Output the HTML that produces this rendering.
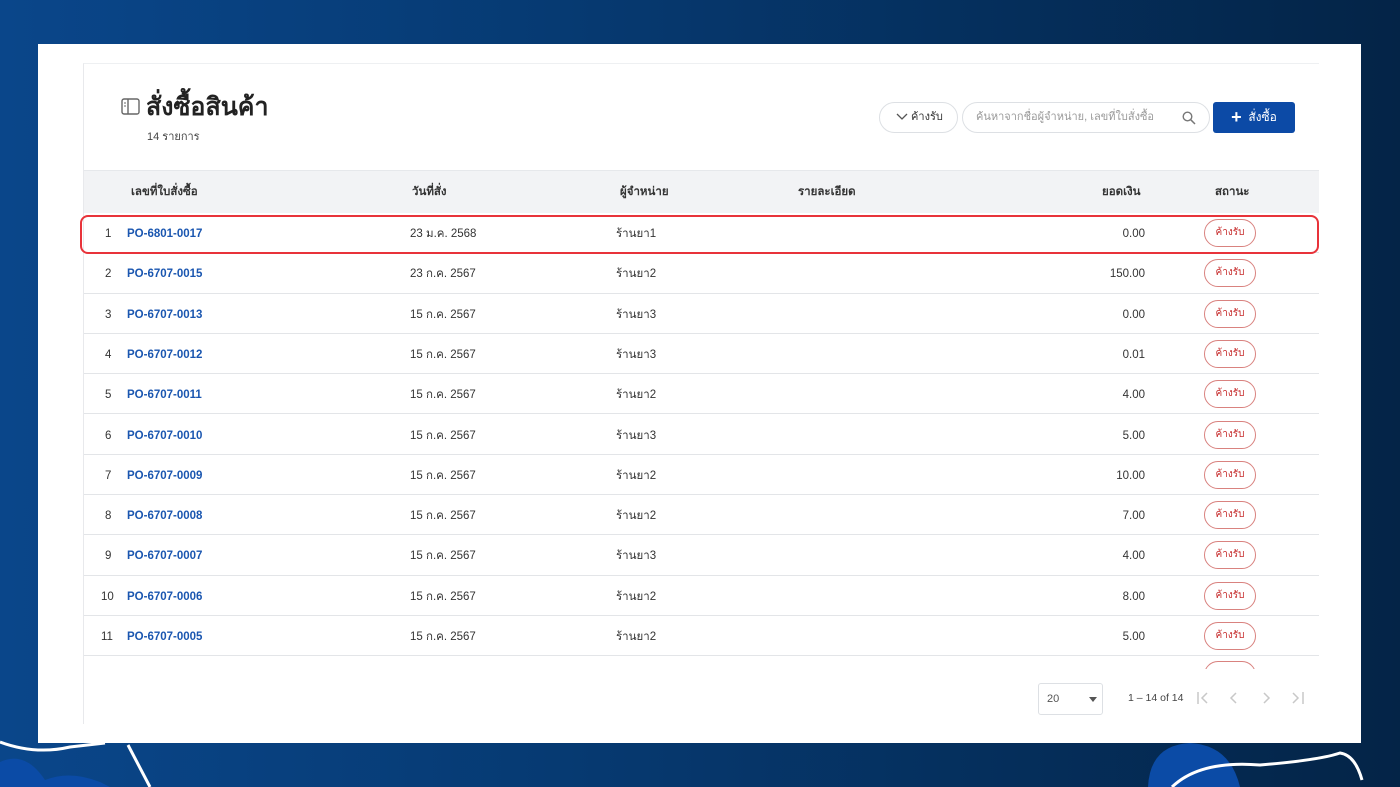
<!DOCTYPE html>
<html><head><meta charset="utf-8"><style>
*{margin:0;padding:0;box-sizing:border-box}
body{width:1400px;height:787px;overflow:hidden;position:relative;font-family:"Liberation Sans","Noto Sans CJK SC",sans-serif;background:linear-gradient(90deg,#0a468a 0%,#063a72 40%,#042447 100%)}
.panel{position:absolute;left:38px;top:44px;width:1323px;height:699px;background:#fff}
.inner{position:absolute;left:45px;top:19px;width:1236px;height:661px;border-left:1px solid #e8e9ec;border-top:1px solid #eef0f2;overflow:hidden}
.t{position:absolute;white-space:nowrap}
.hdr{position:absolute;left:0;top:106px;width:1236px;height:43px;background:#f2f3f5;border-top:1px solid #e6e8eb;font-size:11.5px;font-weight:bold;color:#333}
.hdr span{position:absolute;top:0;line-height:42px}
.row{position:absolute;left:0;width:1236px;height:40.3px;border-bottom:1px solid #e3e5e8;font-size:11.5px;color:#333}
.row span{position:absolute;top:1px;line-height:40px;height:40px}
.badge{position:absolute;left:1120px;top:6px;width:52px;height:28px;border:1px solid #d9827f;border-radius:14px;color:#c62b2b;font-size:10px;text-align:center;line-height:26px}
</style></head><body>
<svg style="position:absolute;left:0;top:720px" width="1400" height="67">
<path d="M0 42 Q25 30 45 60 Q70 50 100 62 L110 67 L0 67Z" fill="#0b4ba6"/>
<path d="M0 22 Q35 35 70 27 L105 23" stroke="#fff" stroke-width="3" fill="none"/>
<path d="M128 25 L150 67" stroke="#fff" stroke-width="3" fill="none"/>
<path d="M1148 67 Q1150 25 1190 23 Q1230 25 1240 67Z" fill="#0b4ba6"/>
<path d="M1172 67 Q1200 40 1260 45 Q1320 40 1340 33 Q1355 35 1362 60" stroke="#fff" stroke-width="3" fill="none"/>
</svg>
<div class="panel"><div class="inner">
<svg class="t" style="left:37px;top:34px" width="19" height="17"><rect x="1" y="1" width="17" height="15" rx="2" fill="none" stroke="#666" stroke-width="1.4"/><line x1="7" y1="1" x2="7" y2="16" stroke="#666" stroke-width="1.4"/><line x1="3" y1="5" x2="5" y2="5" stroke="#666"/><line x1="3" y1="8" x2="5" y2="8" stroke="#666"/></svg>
<div class="t" style="left:62px;top:23px;font-size:25px;font-weight:bold;color:#222">สั่งซื้อสินค้า</div>
<div class="t" style="left:63px;top:63px;font-size:11px;color:#444">14 รายการ</div>
<div class="t" style="left:795px;top:38px;width:79px;height:31px;border:1px solid #dde0e4;border-radius:16px;font-size:11px;color:#333;line-height:29px;padding-left:16px"><svg width="12" height="8" style="vertical-align:middle"><path d="M1 1 L6 6 L11 1" fill="none" stroke="#555" stroke-width="1.3"/></svg> ค้างรับ</div>
<div class="t" style="left:878px;top:38px;width:248px;height:31px;border:1px solid #dde0e4;border-radius:16px;font-size:11px;color:#999;line-height:29px;padding-left:13px">ค้นหาจากชื่อผู้จำหน่าย, เลขที่ใบสั่งซื้อ</div>
<svg class="t" style="left:1098px;top:47px" width="14" height="14"><circle cx="5.5" cy="5.5" r="4.3" fill="none" stroke="#777" stroke-width="1.4"/><line x1="8.7" y1="8.7" x2="13" y2="13" stroke="#777" stroke-width="1.5"/></svg>
<div class="t" style="left:1129px;top:38px;width:82px;height:31px;background:#0c4aa6;border-radius:3px;color:#fff;font-size:12px;line-height:31px;text-align:center"><b style="font-size:18px;vertical-align:-2px">+</b>&nbsp; สั่งซื้อ</div>
<div class="hdr">
<span style="left:47px">เลขที่ใบสั่งซื้อ</span>
<span style="left:328px">วันที่สั่ง</span>
<span style="left:536px">ผู้จำหน่าย</span>
<span style="left:714px">รายละเอียด</span>
<span style="left:1018px">ยอดเงิน</span>
<span style="left:1131px">สถานะ</span>
</div>
<div id="rows"></div>
<div style="position:absolute;left:0;top:593px;width:1236px;height:12px;overflow:hidden"><div class="badge" style="top:4px"></div></div>
<div class="t" style="left:954px;top:619px;width:65px;height:32px;border:1px solid #dde0e4;border-radius:3px;font-size:11px;color:#555;line-height:30px;padding-left:8px">20<span style="position:absolute;left:50px;top:13px;border:4px solid transparent;border-top:5px solid #555"></span></div>
<div class="t" style="left:1044px;top:628px;font-size:10.5px;color:#444">1 – 14 of 14</div>
<svg class="t" style="left:1112px;top:627px" width="115" height="14" fill="none" stroke="#c8c8c8" stroke-width="1.5"><path d="M2 1 V13 M11 2 L6 7 L11 12"/><path d="M40 2 L35 7 L40 12"/><path d="M68 2 L73 7 L68 12"/><path d="M97 2 L102 7 L97 12 M107 1 V13"/></svg>
</div>
<div style="position:absolute;left:42px;top:171px;width:1239px;height:39px;border:2.5px solid #e8333a;border-radius:8px"></div>
</div>
<script>
var d=[["PO-6801-0017","23 ม.ค. 2568","ร้านยา1","0.00"],["PO-6707-0015","23 ก.ค. 2567","ร้านยา2","150.00"],["PO-6707-0013","15 ก.ค. 2567","ร้านยา3","0.00"],["PO-6707-0012","15 ก.ค. 2567","ร้านยา3","0.01"],["PO-6707-0011","15 ก.ค. 2567","ร้านยา2","4.00"],["PO-6707-0010","15 ก.ค. 2567","ร้านยา3","5.00"],["PO-6707-0009","15 ก.ค. 2567","ร้านยา2","10.00"],["PO-6707-0008","15 ก.ค. 2567","ร้านยา2","7.00"],["PO-6707-0007","15 ก.ค. 2567","ร้านยา3","4.00"],["PO-6707-0006","15 ก.ค. 2567","ร้านยา2","8.00"],["PO-6707-0005","15 ก.ค. 2567","ร้านยา2","5.00"]];
var h="";d.forEach(function(r,i){h+='<div class="row" style="top:'+(149+i*40.3)+'px"><span style="left:'+(i<9?21:17)+'px">'+(i+1)+'</span><span style="left:43px;color:#1a56b0;font-weight:bold">'+r[0]+'</span><span style="left:326px">'+r[1]+'</span><span style="left:532px">'+r[2]+'</span><span style="right:175px">'+r[3]+'</span><div class="badge">ค้างรับ</div></div>'});
document.getElementById("rows").innerHTML=h;
</script>
</body></html>
